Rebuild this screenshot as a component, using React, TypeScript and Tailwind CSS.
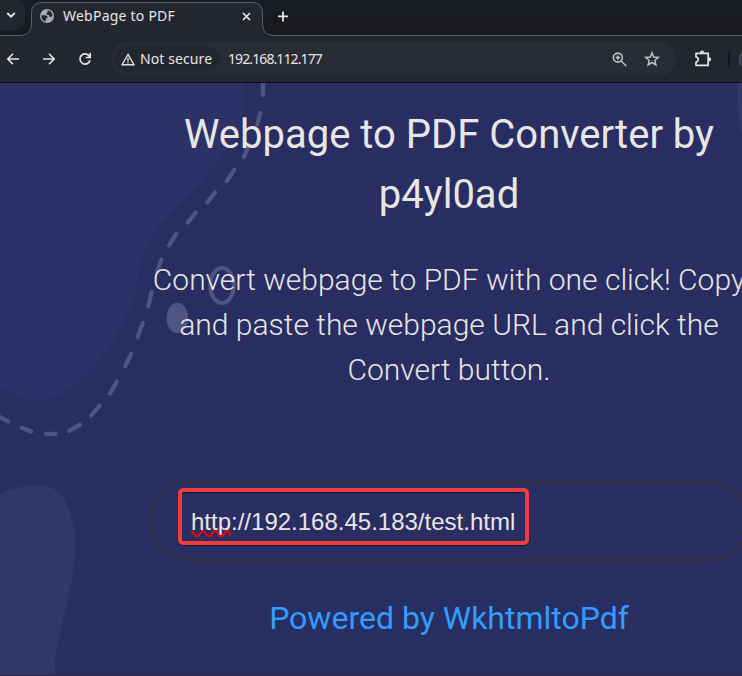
import React from 'react';

const dashes = [
  [263, 80, 263, 97], [260.7, 111, 257, 126], [250, 143, 243, 159], [235.5, 168, 225.5, 183],
  [216.5, 191, 206, 204], [197, 211, 186.5, 224], [177.5, 232, 168, 247], [162, 258, 156.5, 273],
  [152, 290, 148, 308], [143.5, 321, 137, 339], [132, 352, 124.5, 368], [118, 380, 109, 395],
  [101, 404, 90, 417], [81.5, 423.5, 67.5, 432], [57.5, 433.7, 44, 434.2], [33, 432.2, 20, 427],
  [10, 422.5, -4, 415],
];

function Backdrop() {
  return (
    <svg className="absolute inset-0" width="742" height="593" viewBox="0 83 742 593" fill="none">
      <path fill="#2c3167" d="M0 83H243Q245 115 236 137C229 153 190 192 169 215C150 237 141 255 138 278C133 318 104 357 88 373C60 406 28 407 0 386Z" />
      <path fill="#31366b" d="M0 494C17 486 31 485 43 485C61 486 73 510 74 531C77 559 71 587 65 611C60 636 54 654 55 676H0Z" />
      <path fill="#31366b" d="M737 83V103Q738 117 742 133V83Z" />
      <g stroke="#4f5582" strokeWidth="4.3" strokeLinecap="round">
        {dashes.map(([x1, y1, x2, y2], i) => {
          const length = Math.hypot(x2 - x1, y2 - y1);
          const dx = ((x2 - x1) / length) * 2;
          const dy = ((y2 - y1) / length) * 2;
          return <line key={i} x1={x1 + dx} y1={y1 + dy} x2={x2 - dx} y2={y2 - dy} />;
        })}
      </g>
      <ellipse cx="222" cy="285.5" rx="11.7" ry="17.5" stroke="#4f5582" strokeWidth="4" />
      <ellipse cx="177.3" cy="318" rx="10.8" ry="15.2" fill="#4f5582" />
    </svg>
  );
}

function TabStrip() {
  return (
    <div className="relative flex h-9 bg-linear-to-b from-[#191c24] to-[#18191d]">
      <div className="flex h-[30px] w-[25px] items-center rounded-r-[10px] bg-[#24262f] pl-[6px]">
        <svg width="10" height="10" viewBox="0 0 10 10" fill="none" stroke="#e6e6e4" strokeWidth="1.8"><path d="M1.3 3 5 6.7 8.7 3" /></svg>
      </div>
      <svg className="absolute inset-0" width="742" height="36" viewBox="0 0 742 36" fill="none">
        <path d="M0 35.5H20Q31.5 35.5 31.5 24V13Q31.5 2.5 42 2.5H252Q262.5 2.5 262.5 13V24Q262.5 35.5 274 35.5H742V37H0Z" fill="#24262f" stroke="#5b5d64" />
      </svg>
      <div className="relative ml-[14px] flex h-8 w-[216px] items-center">
        <svg width="16" height="16" viewBox="0 0 16 16">
          <circle cx="8" cy="8" r="7" fill="#a9adb7" />
          <path fill="#24262f" d="M2.5 7.2H6.2L8.6 8.4 8.4 10.2 6.8 10.6V13.6C4 13 2.1 10.6 2.5 7.2ZM8.2 2.3C11.2 2.5 13.3 4.7 13.6 7.3L12.6 8.8H10.4L9.8 7 8 6.8 7.2 5.4 8.8 4.3Z" />
        </svg>
        <span className="ml-[8px] text-[14px] leading-5 tracking-[0.23px] text-[#e6e6e4]">WebPage to PDF</span>
        <svg className="ml-auto mr-[4px]" width="9" height="9" viewBox="0 0 9 9" stroke="#e6e6e4" strokeWidth="1.7"><path d="m1 1 7 7m0-7L1 8" /></svg>
      </div>
      <svg className="relative ml-[22px] mt-[11px]" width="12" height="11" viewBox="0 0 12 11" stroke="#e6e6e4" strokeWidth="1.8"><path d="M6 .5v10M1 5.3h10" /></svg>
    </div>
  );
}

function Toolbar() {
  return (
    <div className="flex h-[47px] items-center border-b border-[#0d0e11] bg-[#24262f]">
      <svg className="ml-[6px] shrink-0" width="14" height="14" viewBox="0 0 14 14" fill="none" stroke="#e6e6e4" strokeWidth="1.6"><path d="M13 7H2M7 1.8 1.8 7 7 12.2" /></svg>
      <svg className="ml-[22px] shrink-0" width="14" height="14" viewBox="0 0 14 14" fill="none" stroke="#e6e6e4" strokeWidth="1.6"><path d="M1 7h11M7 1.8 12.2 7 7 12.2" /></svg>
      <svg className="ml-[22px] shrink-0" width="14" height="14" viewBox="0 0 14 14" fill="none" stroke="#e6e6e4" strokeWidth="1.7"><path d="M12 8.2A5.1 5.1 0 1 1 11.2 4L12 5.1M12.2 1v4.5H7.8" /></svg>
      <div className="ml-[19px] flex h-[34px] w-[565px] shrink-0 items-center rounded-full bg-[#292b35] pl-[4px] pr-[16px]">
        <div className="flex h-6 w-[105px] shrink-0 items-center rounded-full bg-[#24262f] pl-[6px]">
          <svg className="shrink-0" width="14" height="13" viewBox="0 0 14 13" fill="none" stroke="#e6e6e4" strokeWidth="1.4"><path d="M7 1.5 1.1 11.7h11.8ZM7 5v3.2M7 9v1.5" /></svg>
          <span className="mb-[2px] ml-[5px] whitespace-nowrap text-[14px] tracking-[0.1px] text-[#e6e6e4]">Not secure</span>
        </div>
        <span className="mb-[2px] ml-[8px] text-[14px] tracking-[-0.9px] text-[#e6e6e4]">192.168.112.177</span>
        <svg className="ml-auto" width="15" height="15" viewBox="0 0 15 15" fill="none" stroke="#bebfc1" strokeWidth="1.6"><circle cx="5.8" cy="5.6" r="4.5" /><path d="m9.2 9 5 5M5.8 3.5v4.2M3.7 5.6h4.2" /></svg>
        <svg className="ml-[17px]" width="16" height="16" viewBox="0 0 16 16" fill="none" stroke="#bebfc1" strokeWidth="1.5"><path d="m8 1.9 1.7 4.2 4.6.3-3.5 3 1.1 4.5L8 11.5l-3.9 2.4 1.1-4.5-3.5-3 4.6-.3Z" /></svg>
      </div>
      <svg className="ml-[18px] shrink-0" width="18" height="18" viewBox="0 0 18 18" fill="none" stroke="#e6e6e4" strokeWidth="1.7">
        <path d="M2 3.3H14.2V15.3H2V12C5 11.6 5 7.4 2 7Z" strokeLinejoin="round" />
        <path d="M6 2.7a2.1 2.1 0 0 1 4.2 0ZM15 7.2a2.1 2.1 0 0 1 0 4.2Z" fill="#e6e6e4" stroke="none" />
      </svg>
      <div className="ml-[16px] h-4 w-[2px] shrink-0 bg-[#15161b]" />
      <div className="ml-[9px] h-6 w-6 shrink-0 rounded-full border border-[#535c6c] bg-[#303643]" />
    </div>
  );
}

export default function App() {
  return (
    <div className="flex h-[676px] w-[742px] flex-col overflow-hidden bg-[#282d62] font-['Noto_Sans',sans-serif]">
      <TabStrip />
      <Toolbar />
      <main className="relative flex-1 overflow-hidden border-b border-[#30294f] font-[Roboto,sans-serif]">
        <Backdrop />
        <div className="relative ml-[149px] flex w-[600px] flex-col items-center pt-[22px] text-center">
          <h1 className="w-[560px] text-[40px] leading-[60px] text-[#e8e6e3]">Webpage to PDF Converter by p4yl0ad</h1>
          <p className="mt-[32px] w-[600px] text-[30px] font-light leading-[45px] text-[#e8e6e3]">Convert webpage to PDF with one click! Copy<br />and paste the webpage URL and click the<br />Convert button.</p>
          <div className="mt-[89px] flex h-20 w-full items-start rounded-[40px] border-2 border-[#303236] pl-[27px] pt-[5px]">
            <div className="flex h-[57px] w-[351px] items-center rounded-[5px] border-4 border-[#f03c3c] pl-[9px] pt-[10px] shadow-[0_1px_1px_#171a38,inset_0_1px_1px_#171a38]">
              <div className="relative whitespace-nowrap font-['Liberation_Sans',sans-serif] text-[24px] leading-7 text-[#e8e6e3]">
                http://192.168.45.183/test.html
                <svg className="absolute left-0 top-[22px]" width="40" height="8" viewBox="0 0 40 8" fill="none" stroke="#f00" strokeWidth="1.9"><path d="M0 1C3 1 3 6.5 6 6.5S9 1 12 1S15 6.5 18 6.5S21 1 24 1S27 6.5 30 6.5S33 1 36 1Q38 1 39.5 6" /></svg>
              </div>
            </div>
          </div>
          <p className="mt-[33px] text-[32px] leading-[48px] text-[#339dff]">Powered by WkhtmltoPdf</p>
        </div>
      </main>
    </div>
  );
}
